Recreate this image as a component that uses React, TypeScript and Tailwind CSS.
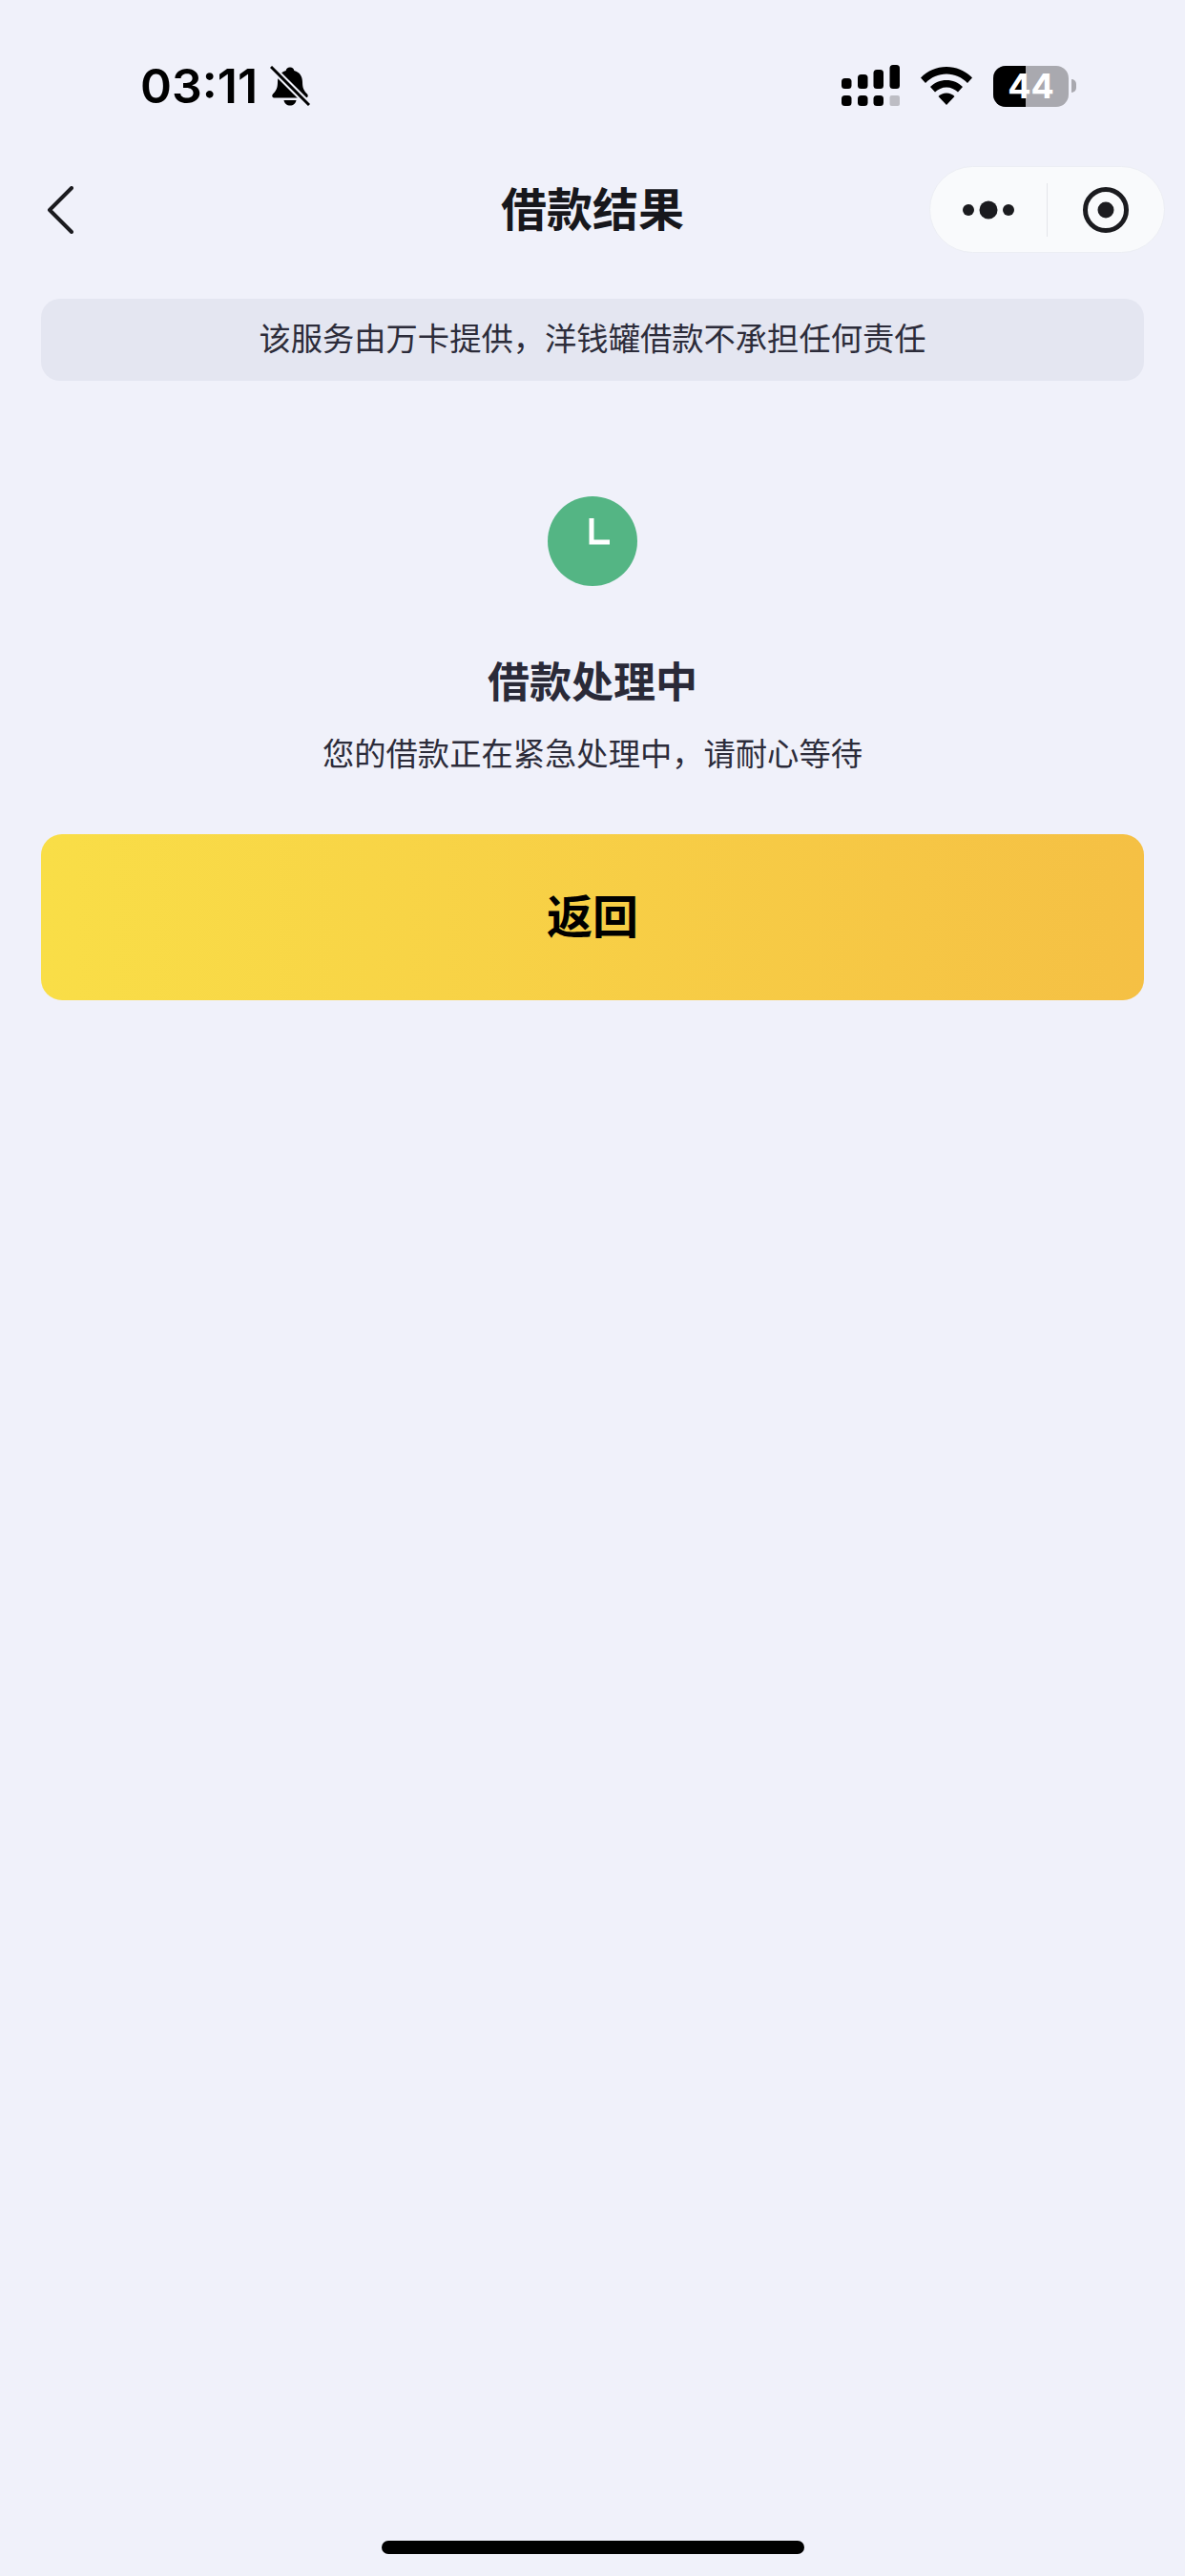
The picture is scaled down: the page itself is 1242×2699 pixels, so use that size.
import React from "react";

const cjk = "font-['Inter','Noto_Sans_CJK_SC',sans-serif]";

function SignalIcon() {
  return (
    <svg width="62" height="44" viewBox="0 0 62 44" className="block">
      <rect x="0" y="14" width="10.5" height="11" rx="3.5" fill="#000" />
      <rect x="17" y="10" width="10.5" height="15" rx="3.5" fill="#000" />
      <rect x="33.500" y="5" width="10.5" height="20" rx="3.500" fill="#000" />
      <rect x="50.500" y="0" width="10.5" height="25" rx="3.500" fill="#000" />
      <rect x="0" y="32" width="10.500" height="11" rx="3.500" fill="#000" />
      <rect x="17" y="32" width="10.500" height="11" rx="3.500" fill="#000" />
      <rect x="33.500" y="32" width="10.500" height="11" rx="3.500" fill="#000" />
      <rect x="50.500" y="32" width="10.500" height="11" rx="2" fill="#bdbdc4" />
    </svg>
  );
}

function WifiIcon() {
  return (
    <svg width="54" height="40" viewBox="0 0 54 40" className="block">
      <path d="M27 0C16.500 0 7.500 4 0 11.500l5 5.500C11 11 18.500 7.500 27 7.500S43 11 49 17l5-5.500C46.500 4 37.500 0 27 0z" fill="#000" />
      <path d="M27 14c-6.500 0-12.500 2.500-17 7l5 5.500c3.200-3 7.400-5 12-5s8.800 2 12 5l5-5.500c-4.500-4.500-10.500-7-17-7z" fill="#000" />
      <path d="M27 27.500c-3.300 0-6.300 1.300-8.500 3.500L27 40l8.500-9c-2.200-2.200-5.200-3.500-8.500-3.500z" fill="#000" />
    </svg>
  );
}

function MutedBell() {
  return (
    <svg width="42" height="42" viewBox="0 0 42 42" className="block">
      <path d="M21 1.500c2.500 0 4 1.500 4.300 3.500 5.700 1.500 8.700 6 8.700 12 0 6 1.500 9 5 12.500 1.500 1.700.5 4-1.500 4h-33c-2 0-3-2.300-1.500-4C6.500 26 8 23 8 17c0-6 3-10.500 8.700-12 .3-2 1.800-3.500 4.300-3.500z" fill="#000" />
      <path d="M14.500 36h13c-.5 3.500-3.200 5.500-6.500 5.500s-6-2-6.500-5.500z" fill="#000" />
      <path d="M0 0l42 42" stroke="#f0f1fa" strokeWidth="7" />
      <path d="M1 1l40 40" stroke="#000" strokeWidth="3" />
    </svg>
  );
}

function Battery() {
  return (
    <div className="flex items-center">
      <div className="relative w-[79px] h-[43px] rounded-[13px] bg-[#a9a9af]">
        <div className="h-full w-[34px] rounded-l-[13px] bg-black" />
        <div className="absolute inset-0 flex items-center justify-center text-white font-bold text-[36px] leading-none font-['Inter',sans-serif]">
          44
        </div>
      </div>
      <div className="ml-[3px] w-[5px] h-[14px] rounded-r-full bg-[#a9a9af]" />
    </div>
  );
}

function StatusBar() {
  return (
    <div className="flex items-center justify-between h-[182px] pb-[2px] pl-[147px] pr-[114px]">
      <div className="flex items-center gap-[13px]">
        <span className="text-[50px] leading-none font-semibold text-black font-['Inter',sans-serif]">
          03:11
        </span>
        <MutedBell />
      </div>
      <div className="flex items-center">
        <SignalIcon />
        <div className="ml-[21px] mr-[22px]">
          <WifiIcon />
        </div>
        <Battery />
      </div>
    </div>
  );
}

function Capsule() {
  return (
    <div className="flex items-center w-[247px] h-[91px] rounded-full bg-[#f9fafc] border border-[#eceef4]">
      <div className="flex-1 flex items-center justify-center">
        <svg width="54" height="20" viewBox="0 0 54 20" className="block">
          <circle cx="6" cy="10" r="6" fill="#1b1b1f" />
          <circle cx="27" cy="10" r="9.500" fill="#1b1b1f" />
          <circle cx="48" cy="10" r="6" fill="#1b1b1f" />
        </svg>
      </div>
      <div className="w-px h-[56px] bg-[#e4e5ea]" />
      <div className="flex-1 flex items-center justify-center">
        <svg width="50" height="50" viewBox="0 0 50 50" className="block">
          <circle cx="25" cy="25" r="21.500" fill="none" stroke="#1b1b1f" strokeWidth="5" />
          <circle cx="25" cy="25" r="8.500" fill="#1b1b1f" />
        </svg>
      </div>
    </div>
  );
}

function NavBar() {
  return (
    <div className="grid grid-cols-[1fr_auto_1fr] items-center h-[91px] px-[21px] -mt-[8px]">
      <svg width="28" height="50" viewBox="0 0 28 50" className="block ml-[28px]">
        <path d="M26 2L3 25l23 23" fill="none" stroke="#1b1b1f" strokeWidth="4" strokeLinecap="round" strokeLinejoin="round" />
      </svg>
      <h1 className="text-[48px] leading-none font-bold text-[#17171c]">借款结果</h1>
      <div className="justify-self-end">
        <Capsule />
      </div>
    </div>
  );
}

export default function App() {
  return (
    <div className={`relative w-[1242px] h-[2699px] overflow-hidden bg-[#f0f1fa] ${cjk}`}>
      <StatusBar />
      <NavBar />
      <div className="px-[43px] mt-[48px]">
        <div className="flex items-center justify-center h-[86px] rounded-[20px] bg-[#e4e6f1] text-[33.3px] text-[#2c2c3a]">
          {"该服务由万卡提供\uFF0C洋钱罐借款不承担任何责任"}
        </div>
      </div>

      <div className="flex flex-col items-center mt-[121px]">
        <div className="w-[94px] h-[94px] rounded-full bg-[#54b584] flex items-center justify-center">
          <svg width="94" height="94" viewBox="0 0 94 94" className="block">
            <path d="M46 23v25h19" fill="none" stroke="#fff" strokeWidth="5" />
          </svg>
        </div>
        <h2 className="mt-[79px] text-[44px] leading-none font-bold text-[#2a2a38]">借款处理中</h2>
        <p className="mt-[37px] text-[33.3px] leading-none text-[#2c2c3a]">
          {"您的借款正在紧急处理中\uFF0C请耐心等待"}
        </p>
      </div>

      <div className="px-[43px] mt-[67px]">
        <button className="flex items-center justify-center w-full h-[174px] rounded-[22px] bg-gradient-to-r from-[#f9de47] to-[#f5c044] text-[48px] font-bold text-black">
          返回
        </button>
      </div>

      <div className="absolute left-[400px] bottom-[23px] w-[443px] h-[14px] rounded-full bg-black" />
    </div>
  );
}
